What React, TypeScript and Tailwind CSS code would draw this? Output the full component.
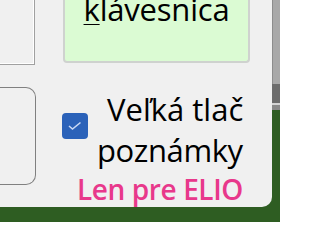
export default function App() {
  const ui = { fontFamily: '"Open Sans", "Noto Sans", sans-serif' };

  return (
    <div className="w-[280px] h-[222px] bg-[#2e5d22] flex overflow-hidden">
      {/* window */}
      <div className="w-[272px] h-[207px] bg-[#f0f0f0] rounded-br-[10px] flex flex-col overflow-hidden" style={ui}>
        {/* top row */}
        <div className="flex items-start h-[65px]">
          <div className="w-[35px] h-[65px] border-r border-b border-[#a0a0a0]">
            <div className="h-full border-r border-b border-white"></div>
          </div>
          <button className="ml-[28px] w-[187px] h-[63px] bg-[#dbfbd3] border-2 border-t-0 border-[#cfd2cf] rounded-b-[4px] flex justify-center items-start">
            <span className="text-[31px] leading-none text-black -mt-[6px] tracking-[-0.2px]">
              <span className="underline underline-offset-[3px] decoration-1">k</span>lávesnica
            </span>
          </button>
        </div>

        {/* bottom row */}
        <div className="flex mt-[22px]">
          <div className="w-[36px] h-[98px] border border-l-0 border-[#808080] rounded-r-[10px]"></div>
          <div className="ml-[26px] flex flex-col">
            <div className="flex">
              <div className="mt-[26px] w-[26px] h-[26px] rounded-[4px] bg-[#2b62b9] flex items-center justify-center shrink-0">
                <svg width="26" height="26" viewBox="0 0 26 26">
                  <path d="M7 13 L10.5 16 L18.5 9.5" fill="none" stroke="#c8d8f4" strokeWidth="1.6" />
                </svg>
              </div>
              <div className="flex flex-col text-[31px] leading-[41px] text-black whitespace-nowrap pt-[2px]">
                <span className="pl-[19px]">Veľká tlač</span>
                <span className="pl-[9px] tracking-[-0.4px]">poznámky</span>
              </div>
            </div>
            <span className="pl-[15px] text-[28px] leading-[36px] font-semibold tracking-[-0.4px] text-[#e8388b] whitespace-nowrap">
              Len pre ELIO
            </span>
          </div>
        </div>
      </div>

      {/* right edge strip */}
      <div className="w-[8px] flex flex-col">
        <div className="h-[84px] bg-[#a8a8a8] border-l border-[#8c8c8c]"></div>
        <div className="h-[19px] bg-[#6c6c6c]"></div>
        <div className="h-[2px] bg-[#d4d4d4]"></div>
        <div className="h-[5px] bg-[#8a8a8a]"></div>
      </div>
    </div>
  );
}
